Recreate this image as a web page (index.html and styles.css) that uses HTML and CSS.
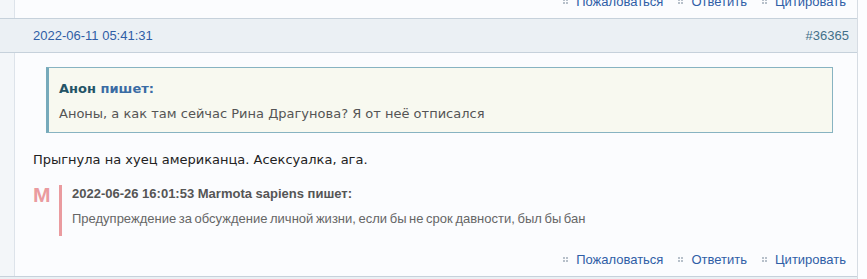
FILE: index.html
```html
<!DOCTYPE html>
<html lang="ru">
<head>
    <meta charset="UTF-8">
    <title>Тред</title>
    <link rel="stylesheet" href="styles.css">
</head>
<body>
    <div class="thread">
        <div class="post prev">
            <div class="post-side"></div>
            <div class="post-main">
                <div class="actions">
                    <a class="act" href="#"><span class="dots"></span>Пожаловаться</a>
                    <a class="act" href="#"><span class="dots"></span>Ответить</a>
                    <a class="act" href="#"><span class="dots"></span>Цитировать</a>
                </div>
            </div>
        </div>

        <div class="post-head">
            <a class="date" href="#">2022-06-11 05:41:31</a>
            <a class="num" href="#">#36365</a>
        </div>

        <div class="post">
            <div class="post-side"></div>
            <div class="post-main">
                <div class="quote">
                    <div class="quote-title"><b class="quote-author">Анон</b> <span class="quote-says">пишет:</span></div>
                    <div class="quote-text">Аноны, а как там сейчас Рина Драгунова? Я от неё отписался</div>
                </div>
                <p class="message">Прыгнула на хуец американца. Асексуалка, ага.</p>
                <div class="mod-note">
                    <div class="mod-mark">M</div>
                    <div class="mod-body">
                        <div class="mod-title">2022-06-26 16:01:53 Marmota sapiens пишет:</div>
                        <div class="mod-text">Предупреждение за обсуждение личной жизни, если бы не срок давности, был бы бан</div>
                    </div>
                </div>
                <div class="actions">
                    <a class="act" href="#"><span class="dots"></span>Пожаловаться</a>
                    <a class="act" href="#"><span class="dots"></span>Ответить</a>
                    <a class="act" href="#"><span class="dots"></span>Цитировать</a>
                </div>
            </div>
        </div>

        <div class="post-head next"></div>
    </div>
</body>
</html>
```

FILE: styles.css
```css
* {
    margin: 0;
    padding: 0;
    box-sizing: border-box;
}
body {
    background: #fcfdff;
    font-family: "Liberation Sans", Arial, sans-serif;
    font-size: 12px;
    color: #444;
}
a {
    text-decoration: none;
}
.thread {
    width: 858px;
    border-right: 1px solid #d6dce3;
}
.post {
    display: flex;
}
.post-side {
    width: 15px;
    background: #f3f6f9;
    border-right: 1px solid #dde3ea;
}
.post-main {
    flex: 1;
    background: #fbfcfe;
    padding: 0 11px 0 18px;
}
.prev {
    height: 18px;
    overflow: hidden;
}
.prev .post-main {
    display: flex;
    flex-direction: column;
    justify-content: flex-end;
}
.prev .actions {
    flex-shrink: 0;
}
.post-head {
    height: 35px;
    background: #ebf0f4;
    border-top: 1px solid #c6d1db;
    border-bottom: 1px solid #c6d1db;
    display: flex;
    justify-content: space-between;
    align-items: center;
    padding: 0 8px 0 33px;
    font-size: 13px;
}
.date {
    color: #2f5ea6;
}
.num {
    color: #43708a;
}
.next {
    height: 10px;
    border-bottom: none;
}
.quote {
    margin: 14px 13px 0 13px;
    background: #f8f9f0;
    border: 1px solid #87b3c1;
    border-left: 3px solid #76aabb;
    padding: 13px 10px 10px 10px;
    font-family: "DejaVu Sans", Verdana, sans-serif;
    font-size: 13px;
}
.quote-title {
    font-weight: bold;
    line-height: 16px;
}
.quote-author {
    color: #245466;
}
.quote-says {
    color: #3a6ca4;
}
.quote-text {
    margin-top: 9px;
    line-height: 16px;
    color: #555;
}
.message {
    margin-top: 19px;
    font-family: "DejaVu Sans", Verdana, sans-serif;
    font-size: 13px;
    line-height: 16px;
    color: #222;
}
.mod-note {
    display: flex;
    margin-top: 17px;
}
.mod-mark {
    width: 26px;
    color: #ea9b9f;
    font-weight: bold;
    font-size: 21px;
    line-height: 20px;
    letter-spacing: -1px;
}
.mod-body {
    border-left: 3px solid #ea9b9f;
    padding: 1px 0 9px 10px;
}
.mod-title {
    font-weight: bold;
    font-size: 13px;
    line-height: 16px;
    color: #555;
}
.mod-text {
    margin-top: 9px;
    font-size: 13px;
    word-spacing: -1px;
    line-height: 16px;
    color: #666;
}
.actions {
    display: flex;
    justify-content: flex-end;
    gap: 15px;
    height: 40px;
    align-items: center;
    padding-top: 6px;
    font-size: 13px;
}
.act {
    display: flex;
    align-items: center;
    color: #2f5ea6;
}
.dots {
    width: 5px;
    height: 5px;
    margin-right: 8px;
    background:
        linear-gradient(#b7c0ca, #b7c0ca) 0 0 / 2px 2px no-repeat,
        linear-gradient(#b7c0ca, #b7c0ca) 3px 0 / 2px 2px no-repeat,
        linear-gradient(#b7c0ca, #b7c0ca) 0 3px / 2px 2px no-repeat,
        linear-gradient(#b7c0ca, #b7c0ca) 3px 3px / 2px 2px no-repeat;
}
```
